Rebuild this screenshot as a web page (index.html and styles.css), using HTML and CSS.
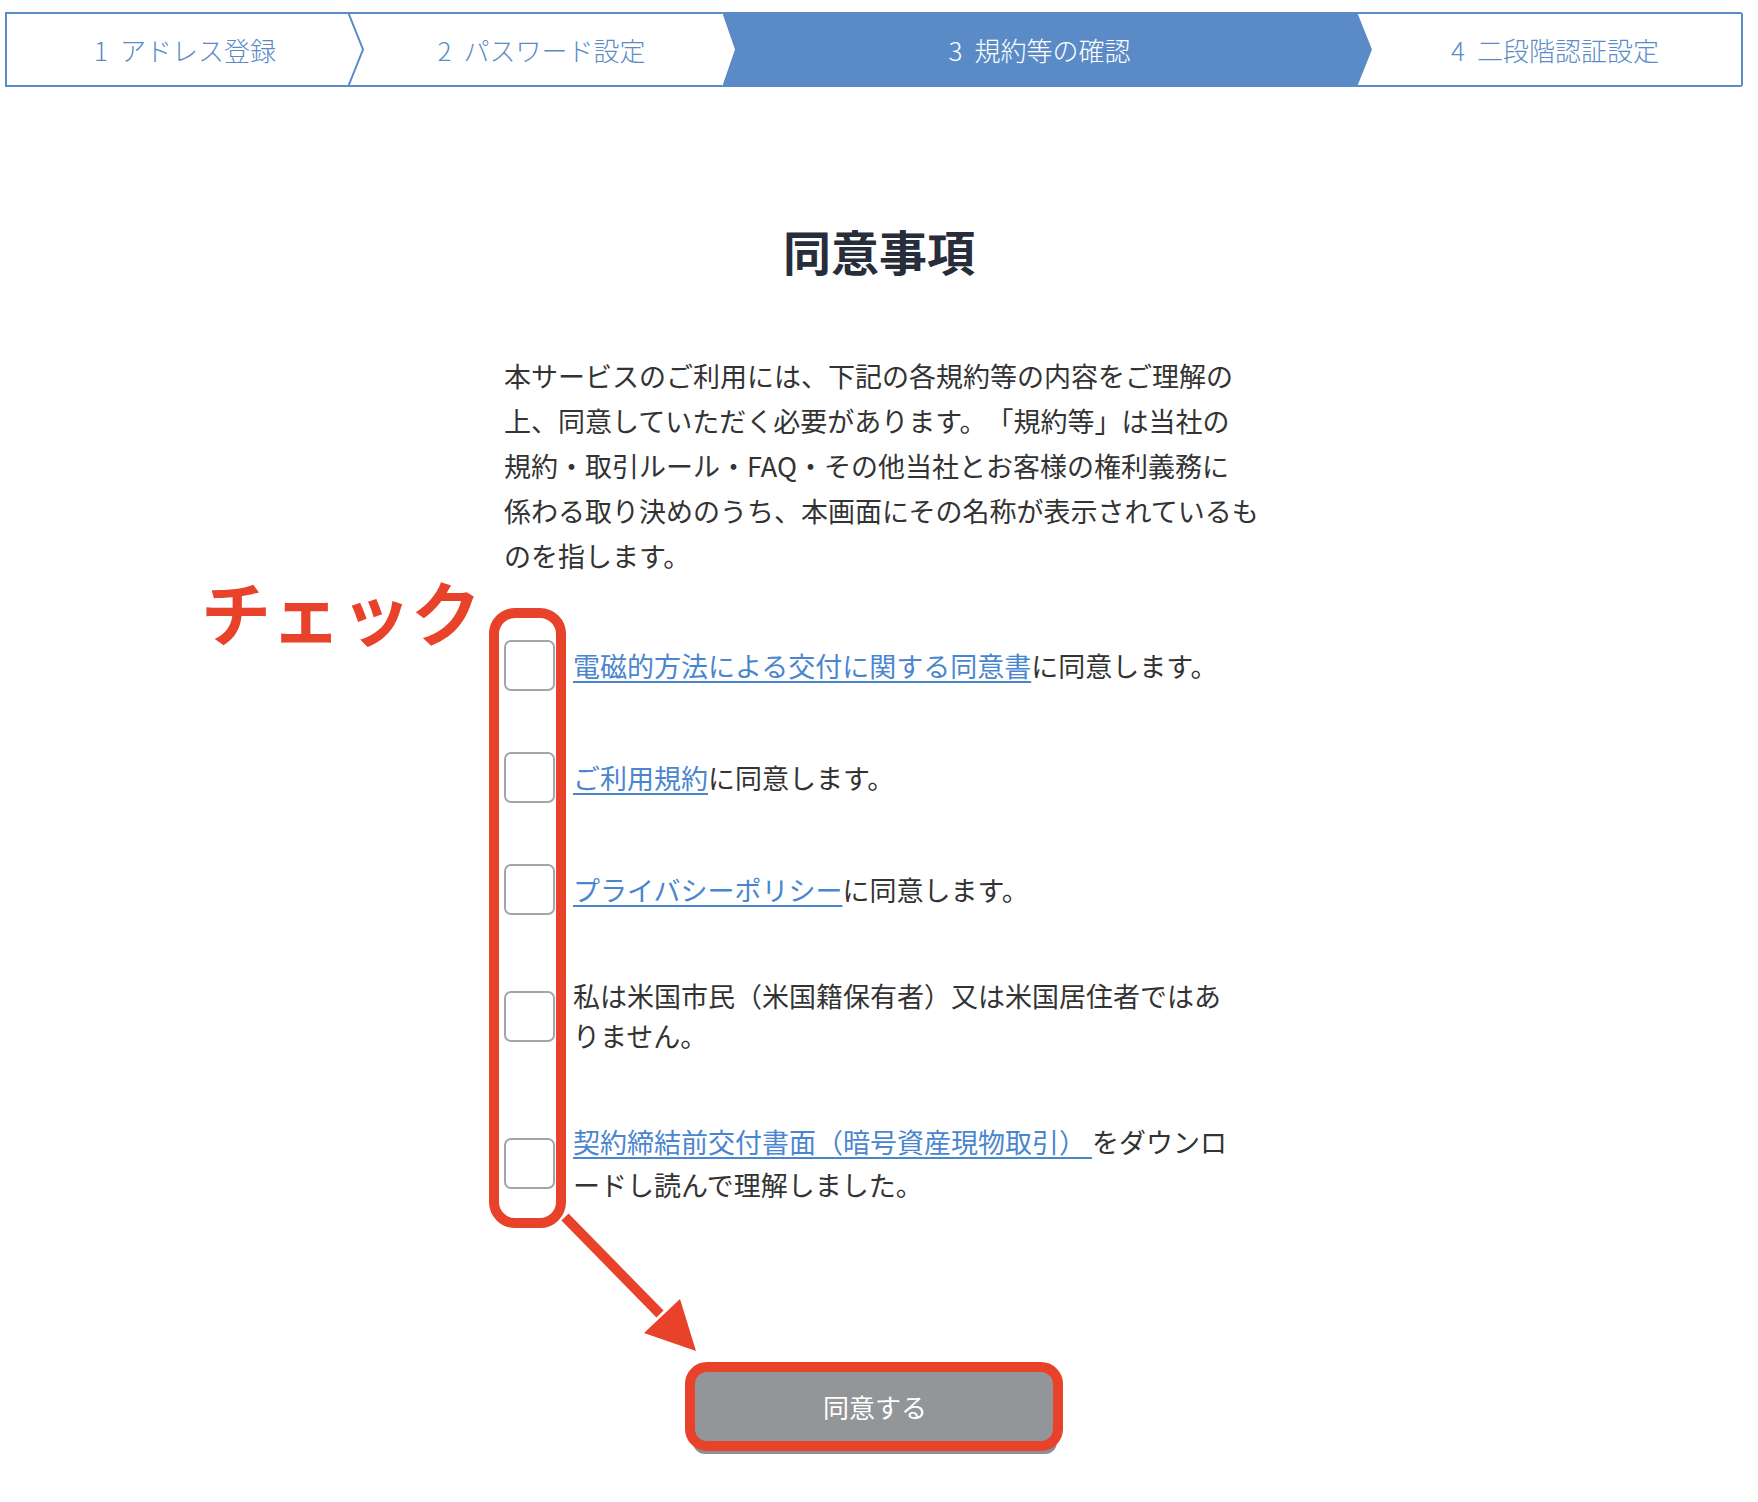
FILE: index.html
```html
<!DOCTYPE html>
<html lang="ja">
<head>
  <meta charset="UTF-8" />
  <meta name="viewport" content="width=device-width, initial-scale=1.0" />
  <title>同意事項</title>
  <link rel="stylesheet" href="styles.css">
</head>
<body>
  <div class="page">
    <div class="steps">
      <div class="step step-first">
        <span class="step-num">1</span>アドレス登録
        <svg class="step-sep" width="17" height="75" viewBox="0 0 17 75">
          <polyline points="1,0 16,37.5 1,75" fill="none" stroke="#5b8bc7" stroke-width="2" />
        </svg>
      </div>
      <div class="step step-second"><span class="step-num">2</span>パスワード設定</div>
      <div class="step step-active"><span class="step-num">3</span>規約等の確認</div>
      <div class="step step-last"><span class="step-num">4</span>二段階認証設定</div>
    </div>

    <div class="content">
      <h1>同意事項</h1>

      <p class="lead">本サービスのご利用には、下記の各規約等の内容をご理解の<br>上、同意していただく必要があります。「規約等」は当社の<br>規約・取引ルール・FAQ・その他当社とお客様の権利義務に<br>係わる取り決めのうち、本画面にその名称が表示されているも<br>のを指します。</p>

      <ul class="agree-list">
        <li class="agree-item">
          <input type="checkbox" class="agree-check">
          <span class="agree-text"><a href="#">電磁的方法による交付に関する同意書</a>に同意します。</span>
        </li>
        <li class="agree-item">
          <input type="checkbox" class="agree-check">
          <span class="agree-text"><a href="#">ご利用規約</a>に同意します。</span>
        </li>
        <li class="agree-item">
          <input type="checkbox" class="agree-check">
          <span class="agree-text"><a href="#">プライバシーポリシー</a>に同意します。</span>
        </li>
        <li class="agree-item">
          <input type="checkbox" class="agree-check">
          <span class="agree-text">私は米国市民（米国籍保有者）又は米国居住者ではありません。</span>
        </li>
        <li class="agree-item agree-item-doc">
          <input type="checkbox" class="agree-check">
          <span class="agree-text"><a href="#">契約締結前交付書面（暗号資産現物取引） </a>をダウンロードし読んで理解しました。</span>
        </li>
      </ul>

      <button class="agree-btn" type="button">同意する</button>
    </div>

    <!-- red markup drawn over the form -->
    <div class="mark-label">チェック</div>
    <div class="mark-box mark-checks"></div>
    <div class="mark-box mark-button"></div>
    <svg class="mark-arrow" width="160" height="160" viewBox="0 0 160 160">
      <line x1="10" y1="7" x2="105" y2="104" stroke="#e8422b" stroke-width="10" />
      <polygon points="89,123 125,89 141,141" fill="#e8422b" />
    </svg>
  </div>
</body>
</html>
```

FILE: styles.css
```css
body {
  margin: 0;
  padding: 0;
  background: #fff;
  color: #333;
  font-family: "Noto Sans CJK JP", "Noto Sans", sans-serif;
}
.page {
  position: relative;
  min-height: 1490px;
  padding-top: 12px;
}

/* progress bar */
.steps {
  display: flex;
  width: 1738px;
  height: 75px;
  margin-left: 5px;
}
.step {
  position: relative;
  flex: none;
  box-sizing: border-box;
  height: 75px;
  display: flex;
  align-items: center;
  justify-content: center;
  border-top: 2px solid #5b8bc7;
  border-bottom: 2px solid #5b8bc7;
  color: #5b8bc7;
  font-size: 26px;
  font-weight: 300;
  white-space: nowrap;
}
.step-num {
  margin-right: 12px;
}
.step-first {
  width: 343px;
  padding-left: 15px;
  border-left: 2px solid #5b8bc7;
}
.step-sep {
  position: absolute;
  top: -2px;
  left: calc(100% - 1px);
  z-index: 2;
}
.step-second {
  width: 374px;
  padding-left: 13px;
}
.step-active {
  z-index: 1;
  width: 650px;
  margin-right: -15px;
  padding-right: 15px;
  background: #5b8bc7;
  color: #fff;
  clip-path: polygon(0 0, calc(100% - 15px) 0, 100% 50%, calc(100% - 15px) 100%, 0 100%, 13px 50%);
}
.step-last {
  width: 386px;
  padding-left: 12px;
  border-right: 2px solid #5b8bc7;
  border-radius: 0 3px 3px 0;
}

/* agreement form */
.content {
  width: 750px;
  margin: 0 auto;
  text-spacing-trim: space-all;
}
h1 {
  margin: 130px 0 0;
  text-align: center;
  font-size: 48px;
  line-height: 66px;
  font-weight: bold;
  color: #272d3b;
}
.lead {
  margin: 70px 0 0;
  font-size: 27px;
  line-height: 45px;
  white-space: nowrap;
}
.agree-list {
  list-style: none;
  margin: 62px 0 0;
  padding: 0;
  display: flex;
  flex-direction: column;
  gap: 61px;
}
.agree-item {
  display: flex;
  align-items: center;
  gap: 18px;
}
.agree-item-doc {
  margin-top: 3px;
}
.agree-check {
  appearance: none;
  flex: none;
  width: 51px;
  height: 51px;
  margin: 0;
  border: 2px solid #a2a6ab;
  border-radius: 7px;
  background: #fff;
}
.agree-text {
  width: 660px;
  font-size: 27px;
  line-height: 40px;
  line-break: normal;
}
.agree-item-doc .agree-text {
  line-height: 43px;
}
.agree-text a {
  color: #4a86cf;
  text-decoration: underline;
  text-underline-offset: 4px;
  text-decoration-thickness: 2px;
}
.agree-btn {
  display: block;
  width: 364px;
  height: 80px;
  margin: 160px 0 0 189px;
  border: none;
  border-radius: 12px;
  background: #939699;
  box-shadow: 0 8px 0 #8c8f93;
  color: #fff;
  font-family: inherit;
  font-size: 26px;
}

/* annotation layer */
.mark-label {
  position: absolute;
  left: 201px;
  top: 576px;
  color: #e8422b;
  font-size: 70px;
  line-height: 70px;
  font-weight: bold;
}
.mark-box {
  position: absolute;
  box-sizing: border-box;
  border: 10px solid #e8422b;
}
.mark-checks {
  left: 489px;
  top: 608px;
  width: 77px;
  height: 620px;
  border-radius: 26px;
}
.mark-button {
  left: 685px;
  top: 1362px;
  width: 378px;
  height: 89px;
  border-radius: 22px;
}
.mark-arrow {
  position: absolute;
  left: 555px;
  top: 1210px;
}
```
